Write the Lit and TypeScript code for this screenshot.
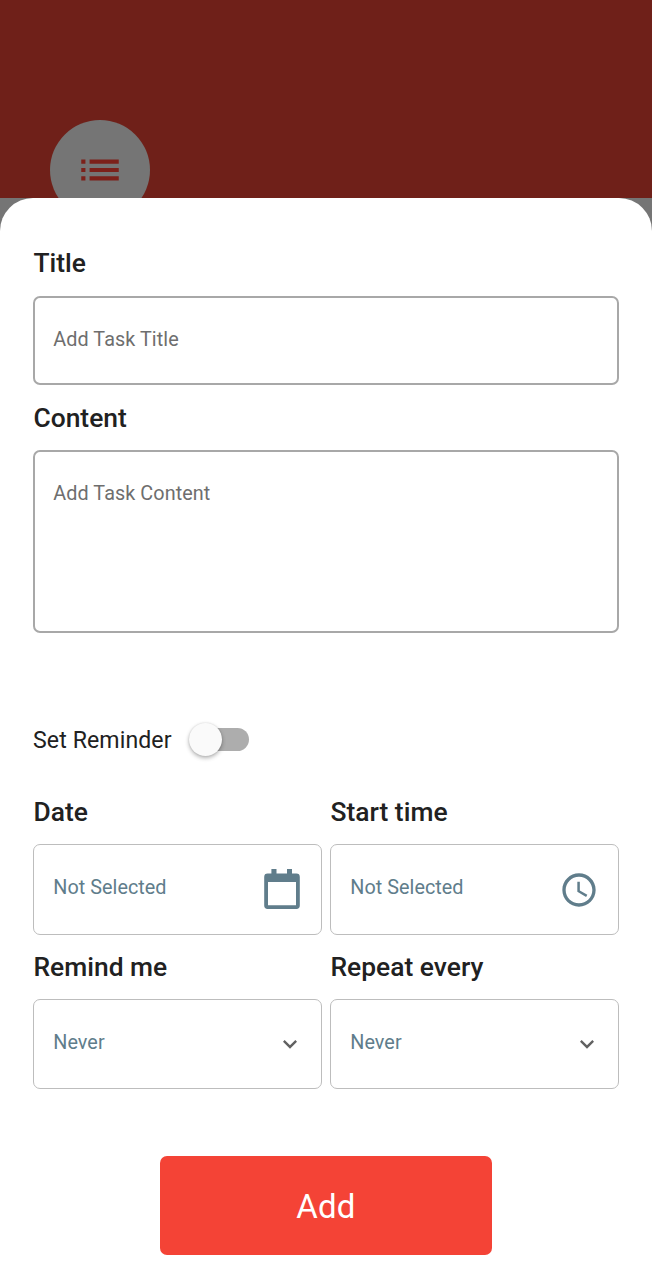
import { LitElement, html, css, svg } from "lit";
import { customElement, property } from "lit/decorators.js";

const calendarIcon = svg`<svg width="36" height="40" viewBox="0 0 36 40" fill="currentColor">
  <path fill-rule="evenodd" d="M7.4 0H12.5V4.6H23V0H28V4.6H32.4Q35.8 4.6 35.8 8V36.6Q35.8 40 32.4 40H3.6Q.2 40 .2 36.6V8Q.2 4.6 3.6 4.6H7.4ZM4 13V36.2H32V13Z"/></svg>`;

const clockIcon = svg`<svg width="40" height="40" viewBox="0 0 24 24" fill="currentColor">
  <path d="M11.99 2C6.47 2 2 6.48 2 12s4.47 10 9.99 10C17.52 22 22 17.52 22 12S17.52 2 11.99 2zM12 20c-4.42 0-8-3.58-8-8s3.58-8 8-8 8 3.58 8 8-3.58 8-8 8z"/>
  <path d="M12.5 7H11v6l5.25 3.15.75-1.23-4.5-2.67z"/></svg>`;

const chevronIcon = svg`<svg width="28" height="28" viewBox="0 0 24 24" fill="#616161">
  <path d="M7.41 8.59 12 13.17l4.59-4.58L18 10l-6 6-6-6z"/></svg>`;

const listIcon = svg`<svg width="50" height="50" viewBox="0 0 24 24" fill="#7c211a">
  <path d="M3 13h2v-2H3v2zm0 4h2v-2H3v2zm0-8h2V7H3v2zm4 4h14v-2H7v2zm0 4h14v-2H7v2zM7 7v2h14V7H7z"/></svg>`;

@customElement("task-field")
class TaskField extends LitElement {
  @property() label = "";

  static styles = css`
    :host { display: block; min-width: 0; }
    .label {
      height: var(--label-height, 54px);
      line-height: 42px;
      font-size: 26.4px;
      font-weight: 500;
      letter-spacing: 0.02px;
      color: #212121;
      padding-left: 0.4px;
      white-space: nowrap;
    }
  `;

  render() {
    return html`<div class="label">${this.label}</div><slot></slot>`;
  }
}

@customElement("picker-box")
class PickerBox extends LitElement {
  @property() value = "";

  static styles = css`
    :host {
      display: flex;
      align-items: center;
      justify-content: space-between;
      box-sizing: border-box;
      height: 90.5px;
      padding: 0 21px 0 19.3px;
      border: 1px solid #bdbdbd;
      border-radius: 7px;
      color: #607d8b;
      font-size: 19.8px;
      letter-spacing: 0.04px;
    }
    .value { padding-bottom: 3.8px; }
    ::slotted(span) { display: flex; }
  `;

  render() {
    return html`<span class="value">${this.value}</span><slot></slot>`;
  }
}

@customElement("app-root")
class AppRoot extends LitElement {
  static styles = css`
    :host {
      display: flex;
      flex-direction: column;
      height: 1280px;
      background: #757575;
      font-family: Roboto, sans-serif;
      overflow: hidden;
    }
    .header {
      flex: none;
      box-sizing: border-box;
      height: 198px;
      padding: 120px 0 0 49.5px;
      background: #6f2019;
      overflow: hidden;
    }
    .avatar {
      display: flex;
      align-items: center;
      justify-content: center;
      width: 100px;
      height: 100px;
      border-radius: 50%;
      background: #757575;
    }
    .sheet {
      flex: 1;
      display: flex;
      flex-direction: column;
      box-sizing: border-box;
      padding: 44px 33px 0;
      border-radius: 33px 33px 0 0;
      background: #fff;
    }
    .input {
      display: block;
      box-sizing: border-box;
      width: 100%;
      height: 89px;
      margin: 0;
      padding: 0 18.3px 3px;
      border: 2px solid #a8a8a8;
      border-radius: 7px;
      background: none;
      outline: none;
      resize: none;
      font: 19.8px/24px Roboto, sans-serif;
      letter-spacing: 0.08px;
      color: #212121;
    }
    .input::placeholder { color: #6e6e6e; opacity: 1; }
    .area { height: 183px; padding-top: 30px; overflow: hidden; }
    .content { margin-top: 12px; --label-height: 53px; }
    .reminder {
      display: flex;
      align-items: center;
      height: 34px;
      margin: 90px 0 34.3px;
      font-size: 23.1px;
      letter-spacing: 0.1px;
      color: #212121;
    }
    .switch {
      display: flex;
      align-items: center;
      width: 57px;
      height: 23px;
      margin: 0 0 1px 20.5px;
      border-radius: 12px;
      background: #adadad;
    }
    .thumb {
      flex: none;
      width: 33px;
      height: 33px;
      margin-left: -3px;
      border-radius: 50%;
      background: #fafafa;
      box-shadow: 0 2px 4px rgba(0, 0, 0, 0.3), 0 0 2px rgba(0, 0, 0, 0.12);
    }
    .grid {
      display: grid;
      grid-template-columns: 289px 289px;
      column-gap: 8px;
      row-gap: 11px;
      --label-height: 53px;
    }
    .calendar { padding-bottom: 1px; }
    .clock { margin-right: -2px; }
    .chevron { margin-right: -4px; }
    .add {
      flex: none;
      width: 332px;
      height: 99.3px;
      margin: 66.5px auto 0;
      padding: 2px 0 0;
      border: 0;
      border-radius: 7px;
      background: #f44336;
      color: #fff;
      font: 33px Roboto, sans-serif;
      letter-spacing: 0.2px;
    }
  `;

  render() {
    return html`
      <div class="header"><div class="avatar">${listIcon}</div></div>
      <div class="sheet">
        <task-field label="Title">
          <input class="input" placeholder="Add Task Title" />
        </task-field>
        <task-field class="content" label="Content">
          <textarea class="input area" placeholder="Add Task Content"></textarea>
        </task-field>
        <div class="reminder">
          <span>Set Reminder</span>
          <div class="switch"><div class="thumb"></div></div>
        </div>
        <div class="grid">
          <task-field label="Date">
            <picker-box value="Not Selected"><span class="calendar">${calendarIcon}</span></picker-box>
          </task-field>
          <task-field label="Start time">
            <picker-box value="Not Selected"><span class="clock">${clockIcon}</span></picker-box>
          </task-field>
          <task-field label="Remind me">
            <picker-box value="Never"><span class="chevron">${chevronIcon}</span></picker-box>
          </task-field>
          <task-field label="Repeat every">
            <picker-box value="Never"><span class="chevron">${chevronIcon}</span></picker-box>
          </task-field>
        </div>
        <button class="add">Add</button>
      </div>
    `;
  }
}
